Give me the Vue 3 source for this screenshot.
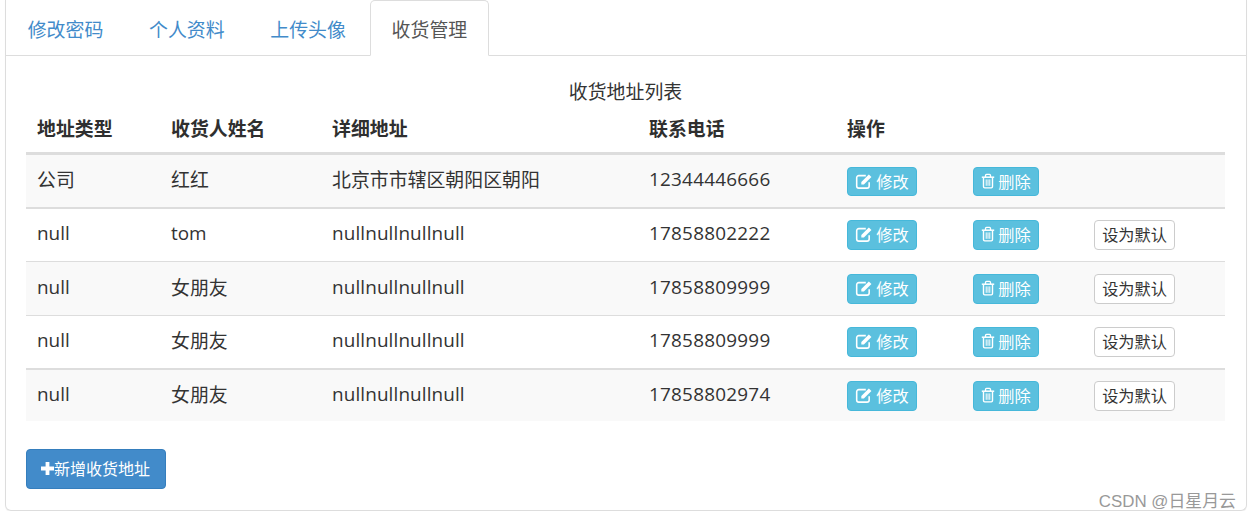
<script setup>
const rows = [
  { type: '公司', name: '红红', addr: '北京市市辖区朝阳区朝阳', tel: '12344446666', def: false, h: 48, b: 2, stripe: true },
  { type: 'null', name: 'tom', addr: 'nullnullnullnull', tel: '17858802222', def: true, h: 48, b: 1, stripe: false },
  { type: 'null', name: '女朋友', addr: 'nullnullnullnull', tel: '17858809999', def: true, h: 49, b: 1, stripe: true },
  { type: 'null', name: '女朋友', addr: 'nullnullnullnull', tel: '17858809999', def: true, h: 48, b: 2, stripe: false },
  { type: 'null', name: '女朋友', addr: 'nullnullnullnull', tel: '17858802974', def: true, h: 47, b: 0, stripe: true }
]
const tabs = ['修改密码', '个人资料', '上传头像', '收货管理']
const cols = [134, 161, 317, 198, 126, 121, 142]
const heads = ['地址类型', '收货人姓名', '详细地址', '联系电话', '操作', '', '']
</script>

<template>
  <div class="page">
    <div class="panel">
      <ul class="tabs">
        <li v-for="(t, i) in tabs" :key="t" class="tab" :class="{ active: i === 3 }">{{ t }}</li>
      </ul>
      <div class="content">
        <div class="caption">收货地址列表</div>
        <table class="grid">
          <colgroup>
            <col v-for="(c, i) in cols" :key="i" :style="{ width: c + 'px' }" />
          </colgroup>
          <thead>
            <tr>
              <th v-for="(h, i) in heads" :key="i">{{ h }}</th>
            </tr>
          </thead>
          <tbody>
            <tr v-for="(r, i) in rows" :key="i" :class="{ stripe: r.stripe, tall: r.def }">
              <td :style="{ height: r.h + 'px', borderBottomWidth: r.b + 'px' }">{{ r.type }}</td>
              <td :style="{ borderBottomWidth: r.b + 'px' }">{{ r.name }}</td>
              <td class="addr" :style="{ borderBottomWidth: r.b + 'px' }">{{ r.addr }}</td>
              <td class="tel" :style="{ borderBottomWidth: r.b + 'px' }">{{ r.tel }}</td>
              <td class="act" :style="{ borderBottomWidth: r.b + 'px' }">
                <span class="btn info edit">
                  <svg class="ico" viewBox="0 0 16 16" width="18" height="18" fill="none">
                    <path d="M12.6 9.2v3.2a1.9 1.9 0 0 1-1.9 1.9H3.4a1.9 1.9 0 0 1-1.9-1.9V5.1a1.9 1.9 0 0 1 1.9-1.9h6.2" stroke="#fff" stroke-width="1.4"/>
                    <path d="M5.6 8.9 12.3 2.2l2.3 2.3-6.7 6.7H5.6z" fill="#fff"/>
                  </svg>
                  <span>修改</span>
                </span>
              </td>
              <td class="act" :style="{ borderBottomWidth: r.b + 'px' }">
                <span class="btn info del">
                  <svg class="ico" viewBox="0 0 14 16" width="14" height="16" fill="none" stroke="#fff">
                    <path d="M2.5 5v8.6c0 .8.5 1.3 1.2 1.3h6.6c.7 0 1.2-.5 1.2-1.3V5" stroke-width="1.4"/>
                    <path d="M.8 4.2h12.4" stroke-width="1.5"/>
                    <path d="M4.5 4V2.4c0-.6.4-1 1-1h3c.6 0 1 .4 1 1V4" stroke-width="1.3"/>
                    <path d="M5.2 6.4v6.4M7 6.4v6.4M8.8 6.4v6.4" stroke-width="1"/>
                  </svg>
                  <span>删除</span>
                </span>
              </td>
              <td class="act" :style="{ borderBottomWidth: r.b + 'px' }">
                <span v-if="r.def" class="btn plain">设为默认</span>
              </td>
            </tr>
          </tbody>
        </table>
        <div class="actions">
          <span class="add">
            <svg class="plus" viewBox="0 0 13 13" width="13" height="13"><path d="M4.6 0h3.8v4.6H13v3.8H8.4V13H4.6V8.4H0V4.6h4.6z" fill="#fff"/></svg>
            <span>新增收货地址</span>
          </span>
        </div>
      </div>
      <div class="mark">CSDN @日星月云</div>
    </div>
  </div>
</template>

<style scoped>
.page {
  padding-left: 5px;
  width: 1242px;
  font-family: "Open Sans", "Noto Sans CJK SC", sans-serif;
  font-size: 18.9px;
  color: #333;
}
.panel {
  position: relative;
  box-sizing: border-box;
  width: 1242px;
  height: 511px;
  border: 1px solid #ddd;
  border-top: 0;
  border-radius: 0 0 6px 6px;
  box-shadow: 0 1px 1px rgba(0, 0, 0, 0.05);
}
.tabs {
  display: flex;
  height: 56px;
  margin: 0;
  padding: 0;
  list-style: none;
  box-sizing: border-box;
  border-bottom: 1px solid #ddd;
}
.tab {
  box-sizing: border-box;
  width: 119px;
  height: 56px;
  margin-right: 2.3px;
  line-height: 56px;
  text-align: center;
  color: #428bca;
  border: 1px solid transparent;
  border-radius: 5px 5px 0 0;
  font-family: "Noto Sans CJK SC", sans-serif;
}
.tab.active {
  color: #555;
  background: #fff;
  border-color: #ddd #ddd #fff;
}
.content {
  padding: 0 20px;
}
.caption {
  height: 53px;
  padding-top: 21px;
  padding-right: 1px;
  box-sizing: border-box;
  line-height: 28px;
  text-align: center;
  font-family: "Noto Sans CJK SC", sans-serif;
}
.grid {
  table-layout: fixed;
  width: 1199px;
  border-collapse: separate;
  border-spacing: 0;
}
th {
  height: 37px;
  padding: 0 0 6px 11px;
  text-align: left;
  font-weight: 700;
  border-bottom: 3px solid #ddd;
  line-height: 30px;
  color: #2f2f2f;
  font-family: "Noto Sans CJK SC", sans-serif;
}
td {
  padding: 0 0 4px 11px;
  border-bottom: 1px solid #ddd;
  vertical-align: middle;
  white-space: nowrap;
}
.tall .addr {
  letter-spacing: 0.12px;
}
.tel {
  letter-spacing: 0.24px;
}
td.act {
  padding-bottom: 0;
}
.stripe td {
  background: #f9f9f9;
}
.btn {
  display: inline-flex;
  align-items: center;
  justify-content: center;
  box-sizing: border-box;
  height: 29px;
  border: 1px solid transparent;
  border-radius: 4px;
  font-size: 16.2px;
  font-family: "Noto Sans CJK SC", sans-serif;
  vertical-align: middle;
}
.tall .btn {
  height: 30px;
  padding-bottom: 2px;
}
.info {
  color: #fff;
  background: #5bc0de;
  border-color: #46b8da;
}
.edit {
  width: 70px;
  gap: 3px;
}
.del {
  width: 66px;
  gap: 3px;
}
.plain {
  width: 81px;
  color: #333;
  background: #fff;
  border-color: #ccc;
}
.ico {
  flex: none;
}
.actions {
  padding-top: 28px;
}
.add {
  display: inline-flex;
  align-items: center;
  box-sizing: border-box;
  width: 140px;
  height: 40px;
  padding-left: 14px;
  padding-bottom: 2px;
  color: #fff;
  background: #428bca;
  border: 1px solid #357ebd;
  border-radius: 4px;
  font-size: 16px;
  font-family: "Noto Sans CJK SC", sans-serif;
}
.plus {
  flex: none;
}
.mark {
  position: absolute;
  right: 10px;
  bottom: -2px;
  font-size: 16.9px;
  line-height: 20px;
  color: #999;
  font-family: "Liberation Sans", "Noto Sans CJK SC", sans-serif;
}
</style>

<style>
html, body {
  margin: 0;
  background: #fff;
}
</style>
